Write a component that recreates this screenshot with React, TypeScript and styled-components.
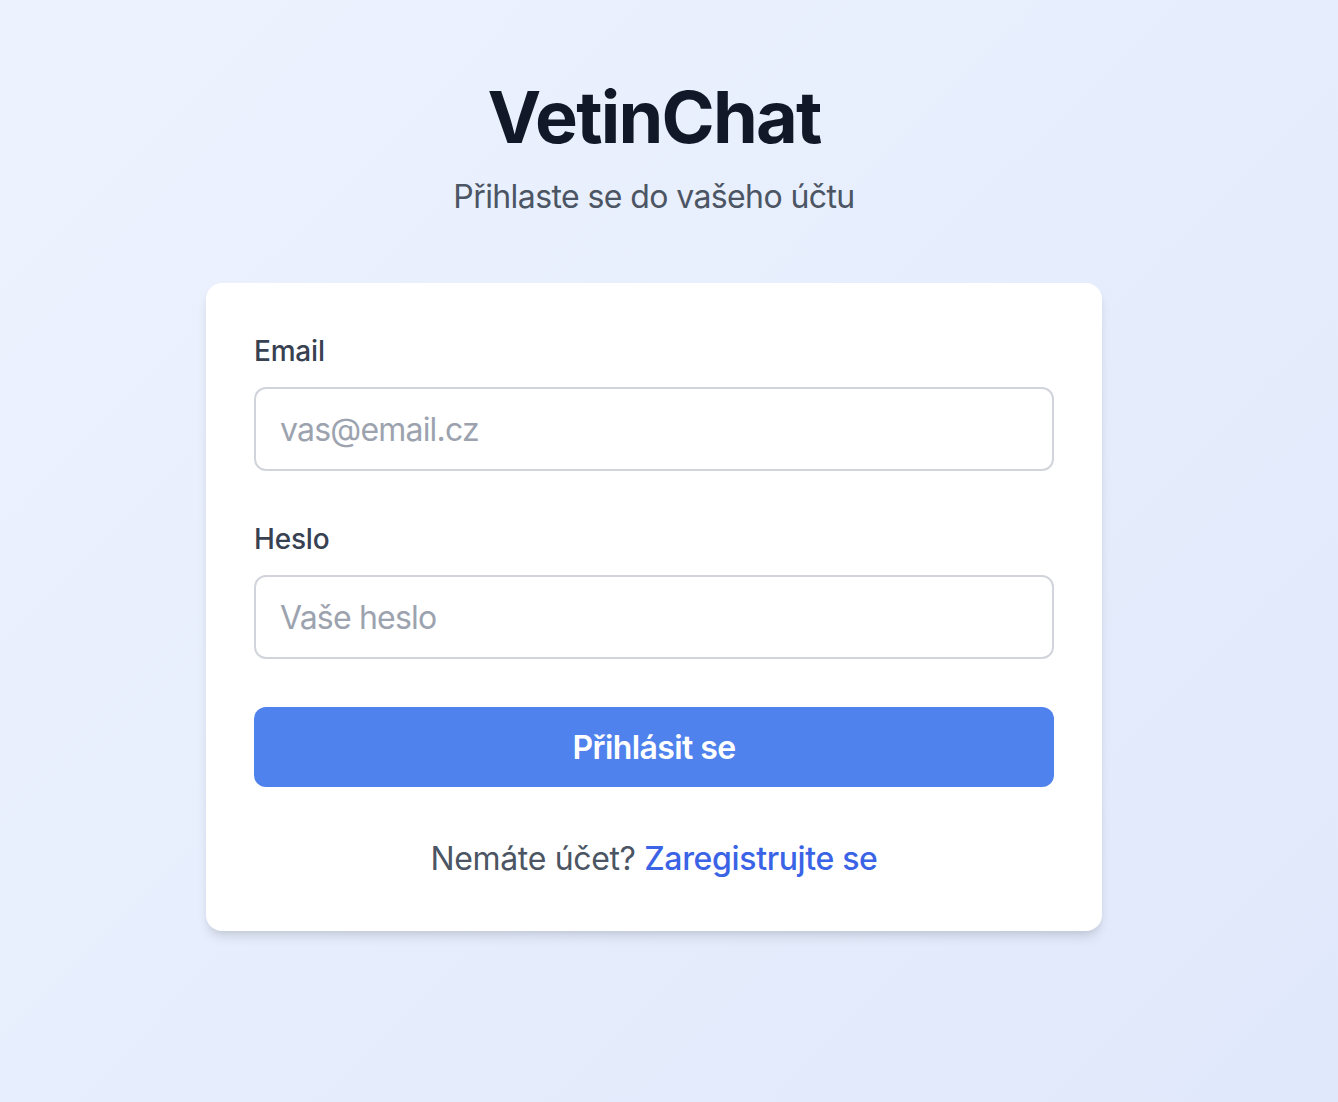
import React from 'react';
import styled, { createGlobalStyle } from 'styled-components';

const Global = createGlobalStyle`
  * { box-sizing: border-box; }
  html, body { margin: 0; padding: 0; }
  body {
    font-family: Inter, "Noto Sans", "Liberation Sans", sans-serif;
    -webkit-font-smoothing: antialiased;
  }
`;

const Page = styled.div`
  min-height: 1102px;
  background: linear-gradient(135deg, #edf3fe 0%, #e0e8fb 100%);
  padding: 77px 30px 0 0;
  display: flex;
  flex-direction: column;
  align-items: center;
`;

const Header = styled.header`
  text-align: center;
  margin-bottom: 62px;
`;

const Title = styled.h1`
  margin: 0;
  font-size: 72px;
  line-height: 80px;
  font-weight: 700;
  color: #111827;
  letter-spacing: -1.8px;
`;

const Subtitle = styled.p`
  margin: 16px 0 0;
  font-size: 32px;
  line-height: 48px;
  color: #4b5563;
  letter-spacing: -0.6px;
`;

const Card = styled.div`
  width: 896px;
  background: #fff;
  border-radius: 16px;
  padding: 48px;
  box-shadow: 0 8px 12px -2px rgba(0, 0, 0, 0.1), 0 4px 8px -4px rgba(0, 0, 0, 0.1);
`;

const Form = styled.form`
  display: flex;
  flex-direction: column;
  gap: 48px;
`;

const Field = styled.div`
  display: flex;
  flex-direction: column;
`;

const Label = styled.label`
  font-size: 28px;
  line-height: 40px;
  font-weight: 500;
  color: #374151;
  margin-bottom: 16px;
  letter-spacing: -0.2px;
`;

const Input = styled.input`
  width: 100%;
  height: 84px;
  padding: 0 24px;
  border: 2px solid #d1d5db;
  border-radius: 12px;
  font-family: inherit;
  font-size: 32px;
  letter-spacing: -0.8px;
  color: #111827;
  outline: none;
  &::placeholder { color: #9ca3af; }
`;

const Button = styled.button`
  height: 80px;
  border: none;
  border-radius: 12px;
  background: #4f82ec;
  color: #fff;
  font-family: inherit;
  font-size: 32px;
  font-weight: 600;
  letter-spacing: -0.6px;
  cursor: pointer;
`;

const Footer = styled.p`
  margin: 48px 0 0;
  text-align: center;
  font-size: 32px;
  line-height: 48px;
  color: #4b5563;
  letter-spacing: -0.35px;
`;

const Link = styled.a`
  color: #3a63e6;
  font-weight: 500;
  text-decoration: none;
`;

export default function App() {
  return (
    <>
      <Global />
      <Page>
        <Header>
          <Title>VetinChat</Title>
          <Subtitle>Přihlaste se do vašeho účtu</Subtitle>
        </Header>
        <Card>
          <Form onSubmit={(e) => e.preventDefault()}>
            <Field>
              <Label htmlFor="email">Email</Label>
              <Input id="email" type="email" placeholder="vas@email.cz" />
            </Field>
            <Field>
              <Label htmlFor="password">Heslo</Label>
              <Input id="password" type="password" placeholder="Vaše heslo" />
            </Field>
            <Button type="submit">Přihlásit se</Button>
          </Form>
          <Footer>
            Nemáte účet? <Link href="#">Zaregistrujte se</Link>
          </Footer>
        </Card>
      </Page>
    </>
  );
}
